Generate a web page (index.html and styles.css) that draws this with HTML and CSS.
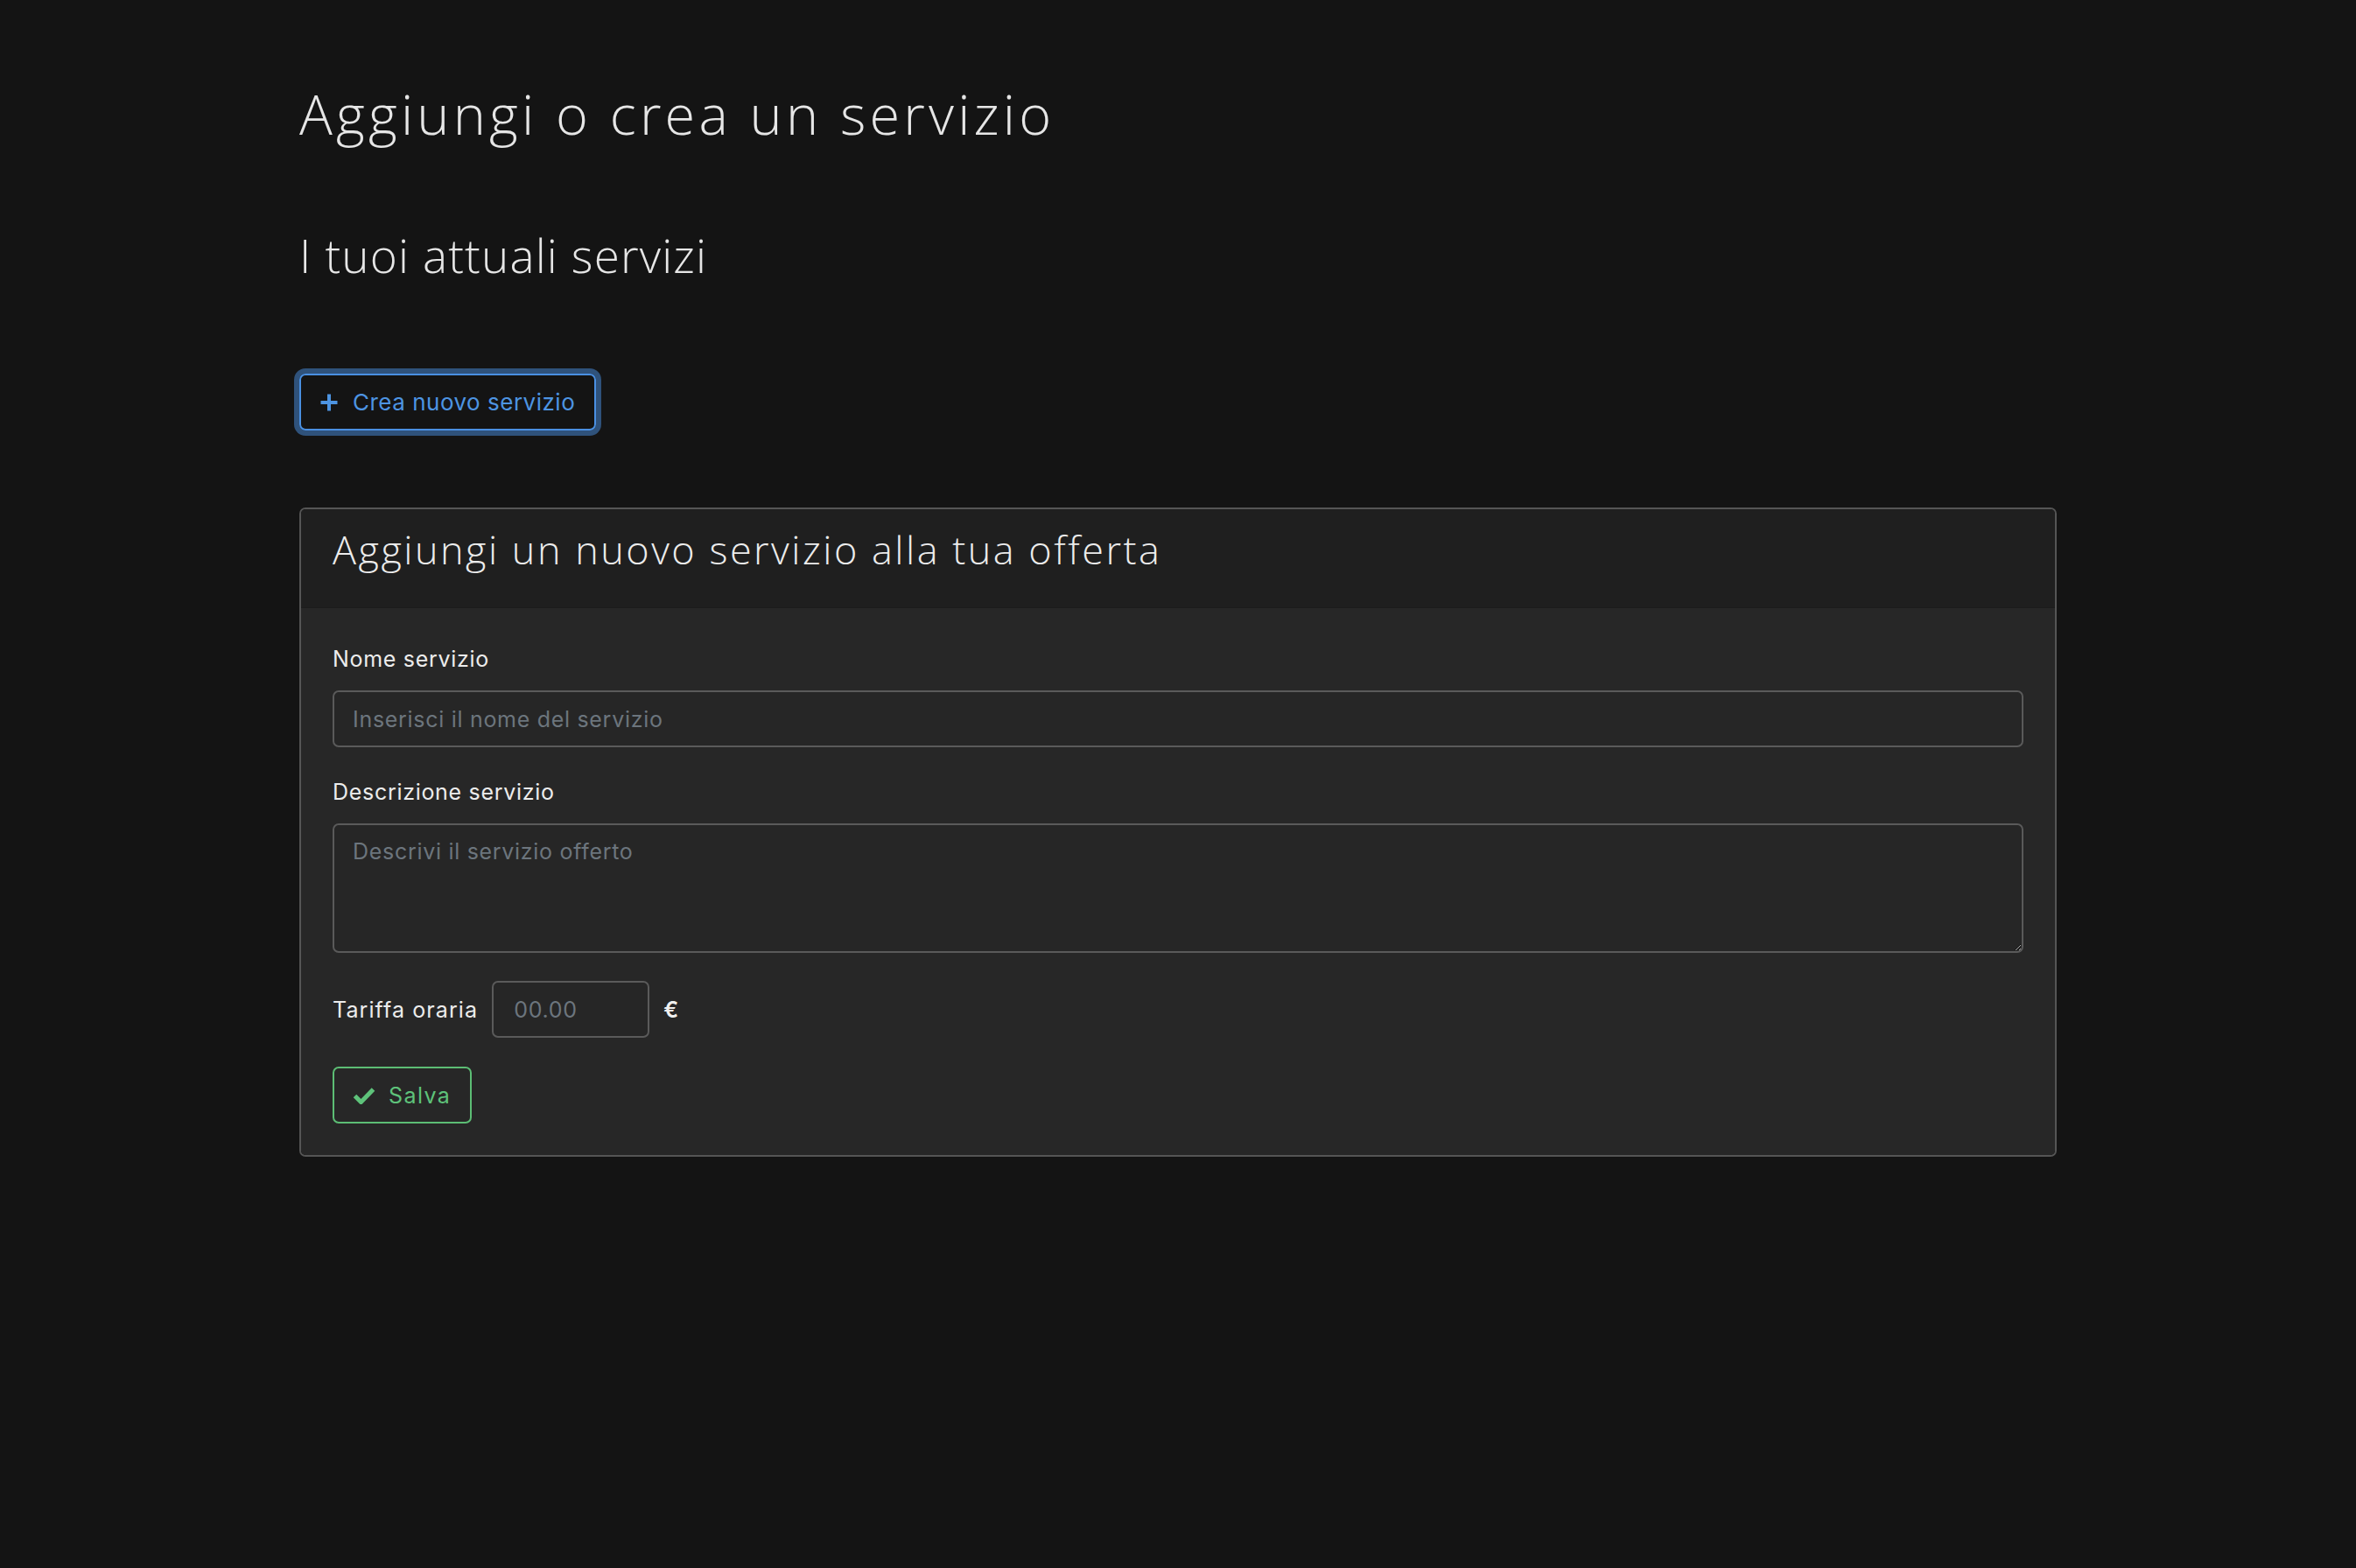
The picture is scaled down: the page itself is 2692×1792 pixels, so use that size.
FILE: index.html
```html
<!DOCTYPE html>
<html lang="it">
<head>
<meta charset="utf-8">
<title>Aggiungi o crea un servizio</title>
<link rel="stylesheet" href="styles.css">
</head>
<body>
<main class="container">
  <h1 class="page-title">Aggiungi o crea un servizio</h1>
  <h2 class="section-title">I tuoi attuali servizi</h2>
  <div class="toolbar">
    <button class="btn btn-primary-outline is-focused" type="button">
      <svg class="icon icon-plus" viewBox="0 0 22 22" aria-hidden="true"><path d="M11 1.5v19M1.5 11h19"/></svg>
      <span>Crea nuovo servizio</span>
    </button>
  </div>
  <section class="card">
    <header class="card-header">
      <h3 class="card-title">Aggiungi un nuovo servizio alla tua offerta</h3>
    </header>
    <form class="card-body">
      <div class="field">
        <label class="form-label" for="nome">Nome servizio</label>
        <input class="form-control" id="nome" type="text" placeholder="Inserisci il nome del servizio">
      </div>
      <div class="field">
        <label class="form-label" for="descr">Descrizione servizio</label>
        <textarea class="form-control textarea" id="descr" placeholder="Descrivi il servizio offerto"></textarea>
      </div>
      <div class="rate-row">
        <label class="rate-label" for="tariffa">Tariffa oraria</label>
        <input class="form-control rate-input" id="tariffa" type="text" placeholder="00.00">
        <span class="currency">€</span>
      </div>
      <div class="actions">
        <button class="btn btn-success-outline" type="button">
          <svg class="icon icon-check" viewBox="0 0 26 20" aria-hidden="true"><path d="M2.5 10.5l7 7L23.5 3"/></svg>
          <span>Salva</span>
        </button>
      </div>
    </form>
  </section>
</main>
</body>
</html>
```

FILE: styles.css
```css
* { box-sizing: border-box; }

body {
  margin: 0;
  background: #141414;
  color: #e8e8e8;
  font-family: Inter, "Open Sans", "Noto Sans", sans-serif;
}

.container {
  width: 2008px;
  margin: 0 auto;
  padding-top: 92px;
  padding-bottom: 200px;
}

.page-title,
.section-title,
.card-title {
  margin: 0;
  font-family: "Open Sans", Inter, sans-serif;
  font-weight: 300;
  color: #e6e6e6;
}

.page-title {
  font-size: 63px;
  line-height: 75px;
  letter-spacing: 4.2px;
}

.section-title {
  margin-top: 93px;
  font-size: 53px;
  line-height: 63px;
  letter-spacing: 1.15px;
}

.toolbar {
  display: flex;
  margin-top: 104px;
}

.btn {
  display: inline-flex;
  align-items: center;
  height: 65px;
  margin: 0;
  border-width: 2px;
  border-style: solid;
  border-radius: 7px;
  background: transparent;
  font-family: inherit;
  font-size: 26px;
  font-weight: 400;
  letter-spacing: 0.5px;
  cursor: pointer;
}

.btn-primary-outline {
  gap: 16px;
  padding: 0 22px 0 21px;
  border-color: #4a90e2;
  color: #4d94e2;
}

.btn-primary-outline.is-focused {
  box-shadow: 0 0 0 6px rgba(74, 144, 226, 0.5);
}

.btn-success-outline {
  gap: 15px;
  padding: 0 22px 0 21px;
  border-color: #5cbd74;
  color: #5ec27a;
  font-size: 25px;
  letter-spacing: 1.4px;
}

.icon {
  flex: none;
  fill: none;
  stroke: currentColor;
  stroke-linecap: butt;
}

.icon-plus {
  width: 22px;
  height: 22px;
  stroke-width: 4;
}

.icon-check {
  width: 26px;
  height: 20px;
  stroke-width: 5;
}

.card {
  margin-top: 88px;
  border: 2px solid #555555;
  border-radius: 7px;
  overflow: hidden;
}

.card-header {
  background: #1f1f1f;
  padding: 19px 36px 40px;
  border-bottom: 1px solid #1b1b1b;
}

.card-title {
  font-size: 45px;
  line-height: 53px;
  letter-spacing: 2.5px;
  color: #ececec;
}

.card-body {
  display: flex;
  flex-direction: column;
  background: #272727;
  padding: 39px 36px 36px;
}

.field {
  display: flex;
  flex-direction: column;
  margin-bottom: 32px;
}

.form-label,
.rate-label {
  font-size: 25px;
  line-height: 38px;
  letter-spacing: 0.7px;
  color: #ececec;
}

.rate-label {
  letter-spacing: 1.1px;
}

.form-label {
  margin-bottom: 17px;
}

.form-control {
  display: block;
  width: 100%;
  height: 65px;
  margin: 0;
  padding: 0 21px;
  border: 2px solid #5a5a5a;
  border-radius: 7px;
  background: #262626;
  color: #e8e8e8;
  font-family: inherit;
  font-size: 25px;
  letter-spacing: 0.7px;
  outline: none;
}

.form-control::placeholder {
  color: #6c757d;
  opacity: 1;
}

.textarea {
  height: 148px;
  padding: 11px 21px;
  line-height: 38px;
  resize: vertical;
}

.rate-row {
  display: flex;
  align-items: center;
  gap: 16px;
}

.rate-input {
  width: 180px;
  padding: 0 23px;
}

.currency {
  font-size: 25px;
  font-weight: 600;
  color: #f0f0f0;
}

.actions {
  display: flex;
  margin-top: 33px;
}
```
